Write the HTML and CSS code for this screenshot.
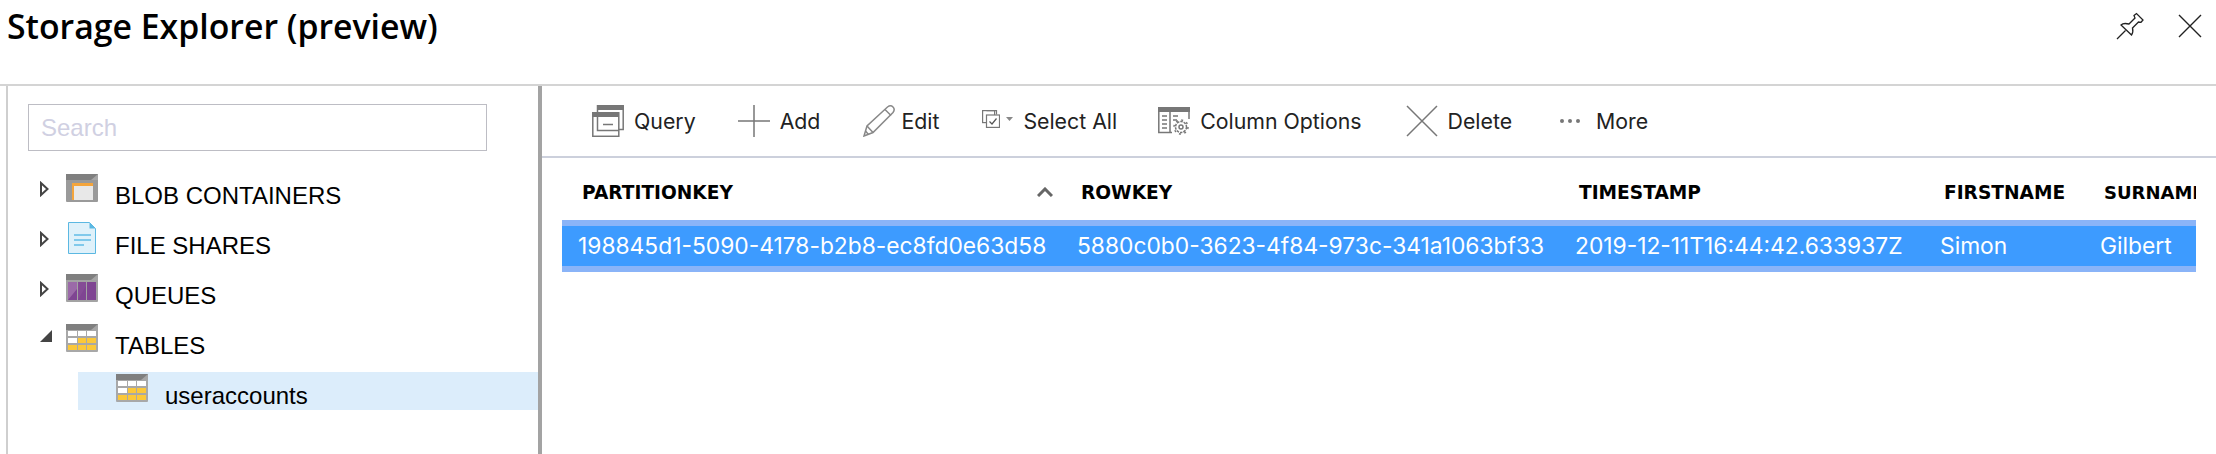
FILE: index.html
```html
<!DOCTYPE html>
<html lang="en">
<head>
<meta charset="utf-8">
<title>Storage Explorer (preview)</title>
<link rel="stylesheet" href="styles.css">
</head>
<body>
<header class="title-bar">
  <h1 class="title">Storage Explorer (preview)</h1>
  <div class="window-actions">
    <svg class="pin" width="28" height="28" viewBox="0 0 28 28" fill="none" stroke="#222" stroke-width="1.3"><path d="M1 27 L9.5 18.5 M5 13 C7 11 11 11.500 13 12 L19 6 L18 3.500 L20.500 1.500 L27 8 L25 10.300 L22.500 10 L16.500 16 C17 18 17 21 15.500 23 Z"/></svg>
    <svg class="close" width="24" height="24" viewBox="0 0 24 24" stroke="#222" stroke-width="1.4"><path d="M1 1 L23 23 M23 1 L1 23"/></svg>
  </div>
</header>
<main class="explorer">
  <aside class="side">
    <div class="search">Search</div>
    <ul class="tree">
      <li class="node">
        <svg class="arrow" width="9" height="16" viewBox="0 0 9 16" fill="#fff" stroke="#444" stroke-width="2"><path d="M1 2 L7.500 8 L1 14 Z"/></svg>
        <svg class="ico" width="32" height="28" viewBox="0 0 32 28"><rect width="32" height="28" rx="1" fill="#9a9a9a"/><rect width="32" height="6" fill="#7f7f7f"/><path d="M25 6 L32 0 V6Z" fill="#a6a6a6"/><rect x="6" y="9" width="21" height="17" fill="#f4a53c"/><rect x="8" y="12" width="19" height="14" fill="#e8e8e8"/></svg>
        <span>BLOB CONTAINERS</span>
      </li>
      <li class="node">
        <svg class="arrow" width="9" height="16" viewBox="0 0 9 16" fill="#fff" stroke="#444" stroke-width="2"><path d="M1 2 L7.500 8 L1 14 Z"/></svg>
        <svg class="ico ico-file" width="32" height="32" viewBox="0 0 32 32"><path d="M2.500 .5 H23.500 L29.500 6.500 V31.500 H2.500 Z" fill="#dff1fa" stroke="#5bb8e2"/><path d="M23.500 .5 L29.500 6.500 H23.500 Z" fill="#5bb8e2"/><path d="M8 13 H25 M8 18 H25 M8 23 H18" stroke="#62bce6" stroke-width="1.500"/></svg>
        <span>FILE SHARES</span>
      </li>
      <li class="node">
        <svg class="arrow" width="9" height="16" viewBox="0 0 9 16" fill="#fff" stroke="#444" stroke-width="2"><path d="M1 2 L7.500 8 L1 14 Z"/></svg>
        <svg class="ico" width="32" height="28" viewBox="0 0 32 28"><rect width="32" height="28" rx="1" fill="#a3a3a3"/><rect width="32" height="6" fill="#7f7f7f"/><path d="M25 6 L32 0 V6Z" fill="#a6a6a6"/><rect x="2" y="8" width="9" height="18" fill="#9b6aa8"/><rect x="12" y="8" width="8" height="18" fill="#854c96"/><rect x="21" y="8" width="9" height="18" fill="#7f4592"/><path d="M2 26 L11 15 V26Z M12 26 L20 12 V26 Z" fill="#7f4592"/></svg>
        <span>QUEUES</span>
      </li>
      <li class="node">
        <svg class="arrow-open" width="12" height="12" viewBox="0 0 12 12" fill="#444"><path d="M0 12 L12 0 V12 Z"/></svg>
        <svg class="ico" width="32" height="28" viewBox="0 0 32 28"><rect width="32" height="28" rx="1" fill="#a8a8a8"/><rect width="32" height="6" fill="#7f7f7f"/><path d="M25 6 L32 0 V6Z" fill="#a6a6a6"/><g fill="#fff"><rect x="2" y="7" width="9" height="5"/><rect x="12" y="7" width="8" height="5"/><rect x="21" y="7" width="9" height="5"/><rect x="2" y="14" width="9" height="5"/></g><g fill="#fbc83a"><rect x="12" y="14" width="8" height="5"/><rect x="21" y="14" width="9" height="5"/><rect x="2" y="21" width="9" height="5"/><rect x="12" y="21" width="8" height="5"/><rect x="21" y="21" width="9" height="5"/></g></svg>
        <span>TABLES</span>
      </li>
      <li class="node child">
        <svg class="ico" width="32" height="28" viewBox="0 0 32 28"><rect width="32" height="28" rx="1" fill="#a8a8a8"/><rect width="32" height="6" fill="#7f7f7f"/><path d="M25 6 L32 0 V6Z" fill="#a6a6a6"/><g fill="#fff"><rect x="2" y="7" width="9" height="5"/><rect x="12" y="7" width="8" height="5"/><rect x="21" y="7" width="9" height="5"/><rect x="2" y="14" width="9" height="5"/></g><g fill="#fbc83a"><rect x="12" y="14" width="8" height="5"/><rect x="21" y="14" width="9" height="5"/><rect x="2" y="21" width="9" height="5"/><rect x="12" y="21" width="8" height="5"/><rect x="21" y="21" width="9" height="5"/></g></svg>
        <span>useraccounts</span>
      </li>
    </ul>
  </aside>
  <section class="content">
    <nav class="toolbar">
      <div class="cmd cmd-query">
        <svg width="32" height="32" viewBox="0 0 32 32" fill="none" stroke="#777" stroke-width="1.500"><path d="M5.500 7 V.8 H31.200 V24.500 H27"/><path d="M5 .5 H32 V5 H5Z" fill="#777" stroke="none"/><rect x=".8" y="7.800" width="26" height="23.500" fill="#fff"/><path d="M0 7 H27 V12 H0Z" fill="#777" stroke="none"/><path d="M11 19.500 H21"/><path d="M5.500 12 V25.500 H27"/></svg>
        <span>Query</span>
      </div>
      <div class="cmd cmd-add">
        <svg width="32" height="32" viewBox="0 0 32 32" stroke="#777" stroke-width="1.500"><path d="M0 16 H32 M16 0 V32"/></svg>
        <span>Add</span>
      </div>
      <div class="cmd cmd-edit">
        <svg width="32" height="32" viewBox="0 0 32 32" fill="none" stroke="#888" stroke-width="1.500"><path d="M1 31 L4 21 L24.500 2 C26.500 .5 28.500 .5 30 2 C31.500 3.500 31.500 5.500 30 7.500 L10 27.500 Z"/><path d="M4 21 L10 27.500 M22 4.500 L28 10.500 M2.500 26 L5.500 29.500"/></svg>
        <span>Edit</span>
      </div>
      <div class="cmd cmd-select">
        <svg class="select-ico" width="18" height="18" viewBox="0 0 18 18" fill="none" stroke="#777" stroke-width="1.200"><path d="M4.500 .6 H14.500 V4.500"/><rect x=".6" y=".6" width="12" height="12" fill="none"/><rect x="4.500" y="5" width="13" height="12.400" fill="#fff"/><path d="M7.500 11.500 L10 14 L14.500 8.500" stroke="#555"/></svg>
        <svg class="select-caret" width="7" height="4" viewBox="0 0 7 4" fill="#888"><path d="M0 0 H7 L3.500 4 Z"/></svg>
        <span>Select All</span>
      </div>
      <div class="cmd cmd-columns">
        <svg width="32" height="29" viewBox="0 0 32 29" fill="none" stroke="#777" stroke-width="1.500"><path d="M.8 4 V25.500 H14"/><path d="M0 0 H32 V5 H0Z" fill="#777" stroke="none"/><path d="M31 5 V12 M12 5 V25 M4 9 H9 M4 13 H9 M4 17 H9 M4 21 H9 M15 9 H20 M15 13 H19"/><circle cx="23" cy="20" r="5.500" fill="#fff" stroke-dasharray="2.500 1"/><circle cx="23" cy="20" r="7" stroke-dasharray="2 3.500"/><circle cx="23" cy="20" r="2"/></svg>
        <span>Column Options</span>
      </div>
      <div class="cmd cmd-delete">
        <svg width="32" height="32" viewBox="0 0 32 32" stroke="#777" stroke-width="1.500"><path d="M1 1 L31 31 M31 1 L1 31"/></svg>
        <span>Delete</span>
      </div>
      <div class="cmd cmd-more">
        <svg class="more-ico" width="20" height="4" viewBox="0 0 20 4" fill="#777"><circle cx="2" cy="2" r="2"/><circle cx="10" cy="2" r="2"/><circle cx="18" cy="2" r="2"/></svg>
        <span>More</span>
      </div>
    </nav>
    <div class="grid">
      <div class="grid-row head">
        <div class="hcell sorted"><span>PARTITIONKEY</span><svg class="sort-ico" width="16" height="10" viewBox="0 0 16 10" fill="none" stroke="#666" stroke-width="3"><path d="M1 9 L8 2 L15 9"/></svg></div>
        <div class="hcell">ROWKEY</div>
        <div class="hcell">TIMESTAMP</div>
        <div class="hcell">FIRSTNAME</div>
        <div class="hcell hcell-last">SURNAME</div>
      </div>
      <div class="grid-row data">
        <div class="cell">198845d1-5090-4178-b2b8-ec8fd0e63d58</div>
        <div class="cell">5880c0b0-3623-4f84-973c-341a1063bf33</div>
        <div class="cell">2019-12-11T16:44:42.633937Z</div>
        <div class="cell">Simon</div>
        <div class="cell">Gilbert</div>
      </div>
    </div>
  </section>
</main>
</body>
</html>
```
FILE: styles.css
```css
html, body { margin: 0; padding: 0; background: #fff; }
body { width: 2216px; height: 454px; overflow: hidden; font-family: "Inter", "Liberation Sans", sans-serif; }

.title-bar { height: 84px; display: flex; justify-content: space-between; align-items: flex-start; }
.title { margin: 4px 0 0 7px; font: 600 33.8px/44px "Open Sans", sans-serif; color: #000; }
.window-actions { display: flex; align-items: flex-start; margin: 12px 14px 0 0; gap: 34px; }
.close { margin-top: 2px; }

.explorer { display: flex; height: 368px; border-top: 2px solid #d4d4d4; }
.side { width: 530px; margin-left: 6px; border-left: 2px solid #cfcfcf; border-right: 4px solid #a3a3a3; flex: none; }
.search { margin: 18px 0 0 20px; width: 445px; height: 45px; padding-left: 12px; border: 1px solid #bdbdc4; font: 24px/46px "Liberation Sans", sans-serif; color: #d0d0e2; }

.tree { list-style: none; margin: 23px 0 0; padding: 0; font: 24px/30px "Liberation Sans", sans-serif; color: #000; }
.node { display: flex; height: 50px; align-items: flex-start; padding-left: 32px; }
.node > span { margin-left: 17px; margin-top: 7px; }
.arrow { margin-top: 7px; margin-right: 17px; }
.arrow-open { margin-top: 6px; margin-right: 14px; }
.ico-file { margin-top: -2px; }
.node.child { margin: -2px 0 0 70px; height: 38px; width: 422px; padding-left: 38px; background: #dcedfb; }
.node.child .ico { margin-top: 2px; }
.node.child > span { margin-left: 17px; margin-top: 9px; }

.content { flex: 1; min-width: 0; }
.toolbar { height: 70px; border-bottom: 2px solid #ccd0dc; display: flex; align-items: center; font-size: 21.3px; color: #222; }
.cmd { display: flex; align-items: center; flex: none; }
.cmd-query { margin-left: 50px; gap: 10px; }
.cmd-add { margin-left: 42px; gap: 10px; }
.cmd-edit { margin-left: 43px; gap: 6px; }
.cmd-select { margin-left: 43px; }
.select-ico { margin-right: 6px; margin-bottom: 4px; }
.select-caret { margin-right: 10px; margin-bottom: 4px; }
.cmd-columns { margin-left: 41px; gap: 10px; }
.cmd-delete { margin-left: 44px; gap: 10px; }
.cmd-more { margin-left: 48px; gap: 16px; }

.grid { margin-left: 20px; width: 1634px; overflow: hidden; }
.grid-row { display: grid; grid-template-columns: 499px 498px 365px 160px 112px; }
.head { height: 62px; font: 700 18.6px/22px "DejaVu Sans", sans-serif; color: #000; }
.hcell { padding: 24px 0 0 20px; white-space: nowrap; overflow: hidden; }
.hcell-last { font-size: 18px; }
.sorted { display: flex; align-items: center; justify-content: space-between; padding-right: 8px; align-self: start; }
.sort-ico { margin-bottom: 3px; }
.data { height: 40px; border-top: 6px solid #8ab4f8; border-bottom: 6px solid #8ab4f8; background: #3d9bff; color: #fff; font-size: 22.8px; line-height: 40px; }
.cell { padding-left: 16px; white-space: nowrap; }
```
